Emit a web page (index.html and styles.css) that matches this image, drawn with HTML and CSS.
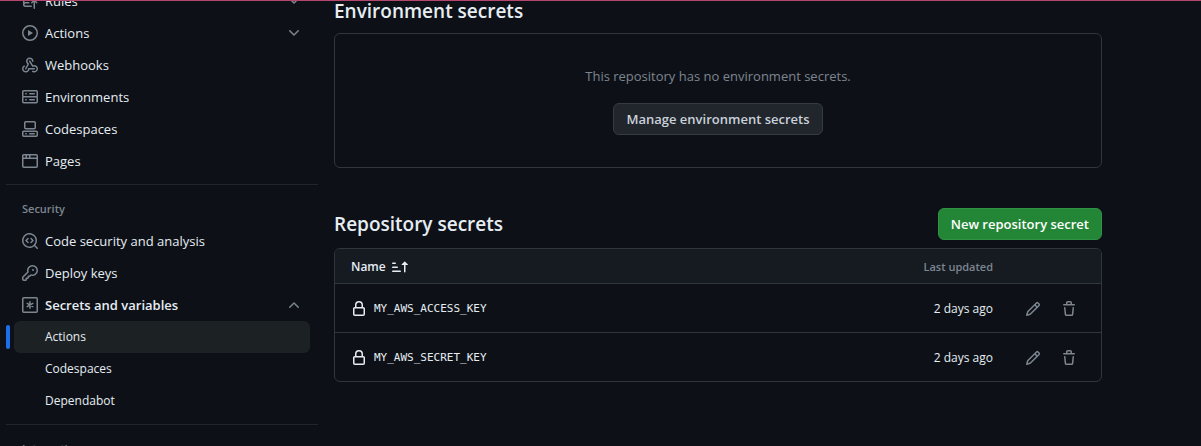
FILE: index.html
```html
<!DOCTYPE html>
<html lang="en">
<head>
<meta charset="utf-8">
<title>Actions secrets</title>
<link rel="stylesheet" href="styles.css">
</head>
<body>
<svg class="sprite" aria-hidden="true">
  <symbol id="i-push" viewBox="0 0 16 16"><path d="M1 2.5A2.5 2.5 0 0 1 3.5 0h8.75a.75.75 0 0 1 .75.75v3.5a.75.75 0 0 1-1.5 0V1.5h-8a1 1 0 0 0-1 1v6.708A2.493 2.493 0 0 1 3.5 9h3.25a.75.75 0 0 1 0 1.5H3.5a1 1 0 0 0 0 2h5.75a.75.75 0 0 1 0 1.5H3.5A2.5 2.5 0 0 1 1 11.5Zm13.23 7.79-1.225-1.224v6.184a.75.75 0 0 1-1.5 0V9.066L10.28 10.29a.75.75 0 0 1-1.06-1.061l2.505-2.504a.75.75 0 0 1 1.06 0L15.29 9.23a.751.751 0 0 1-1.06 1.06Z"/></symbol>
  <symbol id="i-play" viewBox="0 0 16 16"><path d="M8 0a8 8 0 1 1 0 16A8 8 0 0 1 8 0ZM1.5 8a6.5 6.5 0 1 0 13 0 6.5 6.5 0 0 0-13 0Zm4.879-2.773 4.264 2.559a.25.25 0 0 1 0 .428l-4.264 2.559A.25.25 0 0 1 6 10.559V5.442a.25.25 0 0 1 .379-.215Z"/></symbol>
  <symbol id="i-webhook" viewBox="0 0 16 16"><path d="M5.5 4.25a2.25 2.25 0 0 1 4.5 0 .75.75 0 0 0 1.5 0 3.75 3.75 0 1 0-6.14 2.889l-2.272 4.258a.75.75 0 0 0 1.324.706L7 7.25a.75.75 0 0 0-.309-1.015A2.25 2.25 0 0 1 5.5 4.25Z"/><path d="M7.364 3.607a.75.75 0 0 1 1.03.257l2.608 4.349a3.75 3.75 0 1 1-.628 6.785.75.75 0 0 1 .752-1.299 2.25 2.25 0 1 0-.033-3.88.75.75 0 0 1-1.03-.256L7.107 4.636a.75.75 0 0 1 .257-1.03Z"/><path d="M2.9 8.776A.75.75 0 0 1 2.625 9.8 2.25 2.25 0 1 0 6 11.75a.75.75 0 0 1 .75-.751h5.5a.75.75 0 0 1 0 1.5H7.425a3.751 3.751 0 1 1-5.55-3.998.75.75 0 0 1 1.024.274Z"/></symbol>
  <symbol id="i-server" viewBox="0 0 16 16"><path d="M1.75 1h12.5c.966 0 1.75.784 1.75 1.75v4c0 .372-.116.717-.314 1 .198.283.314.628.314 1v4a1.75 1.75 0 0 1-1.75 1.75H1.75A1.75 1.75 0 0 1 0 12.75v-4c0-.358.109-.707.314-1a1.739 1.739 0 0 1-.314-1v-4C0 1.784.784 1 1.75 1ZM1.5 2.75v4c0 .138.112.25.25.25h12.5a.25.25 0 0 0 .25-.25v-4a.25.25 0 0 0-.25-.25H1.75a.25.25 0 0 0-.25.25Zm.25 5.75a.25.25 0 0 0-.25.25v4c0 .138.112.25.25.25h12.5a.25.25 0 0 0 .25-.25v-4a.25.25 0 0 0-.25-.25ZM7 4.75A.75.75 0 0 1 7.75 4h4.5a.75.75 0 0 1 0 1.5h-4.5A.75.75 0 0 1 7 4.75ZM7.75 10h4.5a.75.75 0 0 1 0 1.5h-4.5a.75.75 0 0 1 0-1.5ZM3 4.75A.75.75 0 0 1 3.75 4h.5a.75.75 0 0 1 0 1.5h-.5A.75.75 0 0 1 3 4.75ZM3.75 10h.5a.75.75 0 0 1 0 1.5h-.5a.75.75 0 0 1 0-1.5Z"/></symbol>
  <symbol id="i-codespaces" viewBox="0 0 16 16"><path d="M0 11.25c0-.966.784-1.75 1.75-1.75h12.5c.966 0 1.75.784 1.75 1.75v3A1.75 1.75 0 0 1 14.25 16H1.75A1.75 1.75 0 0 1 0 14.25Zm2-9.5C2 .784 2.784 0 3.75 0h8.5C13.216 0 14 .784 14 1.75v5a1.75 1.75 0 0 1-1.75 1.75h-8.5A1.75 1.75 0 0 1 2 6.75Zm1.75-.25a.25.25 0 0 0-.25.25v5c0 .138.112.25.25.25h8.5a.25.25 0 0 0 .25-.25v-5a.25.25 0 0 0-.25-.25Zm-2 9.5a.25.25 0 0 0-.25.25v3c0 .138.112.25.25.25h12.5a.25.25 0 0 0 .25-.25v-3a.25.25 0 0 0-.25-.25Z"/><path d="M7 12.75a.75.75 0 0 1 .75-.75h4.5a.75.75 0 0 1 0 1.5h-4.5a.75.75 0 0 1-.75-.75Zm-4 0a.75.75 0 0 1 .75-.75h.5a.75.75 0 0 1 0 1.5h-.5a.75.75 0 0 1-.75-.75Z"/></symbol>
  <symbol id="i-browser" viewBox="0 0 16 16"><path d="M0 2.75C0 1.784.784 1 1.75 1h12.5c.966 0 1.75.784 1.75 1.75v10.5A1.75 1.75 0 0 1 14.25 15H1.75A1.75 1.75 0 0 1 0 13.25ZM14.5 6h-13v7.25c0 .138.112.25.25.25h12.5a.25.25 0 0 0 .25-.25Zm-6-3.5v2h6V2.75a.25.25 0 0 0-.25-.25ZM5 2.5v2h2v-2Zm-3.25 0a.25.25 0 0 0-.25.25V4.5h2v-2Z"/></symbol>
  <symbol id="i-codescan" viewBox="0 0 16 16"><path d="M8.47 4.97a.75.75 0 0 0 0 1.06L9.94 7.5 8.47 8.97a.75.75 0 1 0 1.06 1.06l2-2a.75.75 0 0 0 0-1.06l-2-2a.75.75 0 0 0-1.06 0ZM6.53 6.03a.75.75 0 0 0-1.06-1.06l-2 2a.75.75 0 0 0 0 1.06l2 2a.75.75 0 1 0 1.06-1.06L5.06 7.5l1.47-1.47Z"/><path d="M12.246 13.307a7.501 7.501 0 1 1 1.06-1.06l2.474 2.473a.749.749 0 1 1-1.06 1.06l-2.474-2.473ZM1.5 7.5a6.002 6.002 0 0 0 3.608 5.504 6.002 6.002 0 0 0 6.486-1.117.748.748 0 0 1 .292-.293A6 6 0 1 0 1.5 7.5Z"/></symbol>
  <symbol id="i-key" viewBox="0 0 16 16"><path d="M10.5 0a5.499 5.499 0 1 1-1.288 10.848l-.932.932a.749.749 0 0 1-.53.22H7v.75a.749.749 0 0 1-.22.53l-.5.5a.749.749 0 0 1-.53.22H5v.75a.749.749 0 0 1-.22.53l-.5.5a.749.749 0 0 1-.53.22h-2A1.75 1.75 0 0 1 0 14.25v-2c0-.199.079-.389.22-.53l4.932-4.932A5.5 5.5 0 0 1 10.5 0Zm-4 5.5c-.001.431.069.86.205 1.269a.75.75 0 0 1-.181.768L1.5 12.56v1.69c0 .138.112.25.25.25h1.69l.06-.06v-1.19a.75.75 0 0 1 .75-.75h1.19l.06-.06v-1.19a.75.75 0 0 1 .75-.75h1.19l1.023-1.025a.75.75 0 0 1 .768-.18A4 4 0 1 0 6.5 5.5ZM11 6a1 1 0 1 1 0-2 1 1 0 0 1 0 2Z"/></symbol>
  <symbol id="i-asterisk" viewBox="0 0 16 16"><g fill="none" stroke="currentColor" stroke-width="1.5" stroke-linecap="round"><rect x=".75" y=".75" width="14.5" height="14.5" rx="1"/><path d="M8 4.75v6.5M5.2 6.4l5.6 3.2M10.8 6.4 5.2 9.6"/></g></symbol>
  <symbol id="i-chevron" viewBox="0 0 16 16"><path d="M12.78 5.22a.749.749 0 0 1 0 1.06l-4.25 4.25a.749.749 0 0 1-1.06 0L3.22 6.28a.749.749 0 1 1 1.06-1.06L8 8.939l3.72-3.719a.749.749 0 0 1 1.06 0Z"/></symbol>
  <symbol id="i-sort" viewBox="0 0 16 16"><path d="m12.927 2.573 3 3A.25.25 0 0 1 15.75 6H13.5v6.75a.75.75 0 0 1-1.5 0V6H9.75a.25.25 0 0 1-.177-.427l3-3a.25.25 0 0 1 .354 0ZM0 12.25a.75.75 0 0 1 .75-.75h7.5a.75.75 0 0 1 0 1.5H.75a.75.75 0 0 1-.75-.75Zm0-4a.75.75 0 0 1 .75-.75h4.5a.75.75 0 0 1 0 1.5H.75A.75.75 0 0 1 0 8.25Zm0-4a.75.75 0 0 1 .75-.75h2.5a.75.75 0 0 1 0 1.5H.75A.75.75 0 0 1 0 4.25Z"/></symbol>
  <symbol id="i-lock" viewBox="0 0 16 16"><path d="M4 4a4 4 0 0 1 8 0v2h.25c.966 0 1.75.784 1.75 1.75v5.5A1.75 1.75 0 0 1 12.25 15h-8.5A1.75 1.75 0 0 1 2 13.25v-5.5C2 6.784 2.784 6 3.75 6H4Zm8.25 3.5h-8.5a.25.25 0 0 0-.25.25v5.5c0 .138.112.25.25.25h8.5a.25.25 0 0 0 .25-.25v-5.5a.25.25 0 0 0-.25-.25ZM10.5 6V4a2.5 2.5 0 1 0-5 0v2Z"/></symbol>
  <symbol id="i-pencil" viewBox="0 0 16 16"><path d="M11.013 1.427a1.75 1.75 0 0 1 2.474 0l1.086 1.086a1.75 1.75 0 0 1 0 2.474l-8.61 8.61c-.21.21-.47.364-.756.445l-3.251.93a.75.75 0 0 1-.927-.928l.929-3.25c.081-.286.235-.547.445-.758l8.61-8.61Zm.176 4.823L9.75 4.81l-6.286 6.287a.253.253 0 0 0-.064.108l-.558 1.953 1.953-.558a.253.253 0 0 0 .108-.064Zm1.238-3.763a.25.25 0 0 0-.354 0L10.811 3.75l1.439 1.44 1.263-1.263a.25.25 0 0 0 0-.354Z"/></symbol>
  <symbol id="i-trash" viewBox="0 0 16 16"><path d="M11 1.75V3h2.25a.75.75 0 0 1 0 1.5H2.75a.75.75 0 0 1 0-1.5H5V1.75C5 .784 5.784 0 6.75 0h2.5C10.216 0 11 .784 11 1.75ZM4.496 6.675l.66 6.6a.25.25 0 0 0 .249.225h5.19a.25.25 0 0 0 .249-.225l.66-6.6a.75.75 0 0 1 1.492.149l-.66 6.6A1.748 1.748 0 0 1 10.595 15h-5.19a1.75 1.75 0 0 1-1.741-1.575l-.66-6.6a.75.75 0 1 1 1.492-.15ZM6.5 1.75V3h3V1.75a.25.25 0 0 0-.25-.25h-2.5a.25.25 0 0 0-.25.25Z"/></symbol>
</svg>

<div class="top-line"></div>
<div class="page">
  <nav class="sidebar" aria-label="Repository settings">
    <ul class="nav-list">
      <li><button class="nav-item" type="button"><svg class="icon"><use href="#i-push"/></svg><span class="nav-label">Rules</span><svg class="icon"><use href="#i-chevron"/></svg></button></li>
      <li><button class="nav-item" type="button"><svg class="icon"><use href="#i-play"/></svg><span class="nav-label">Actions</span><svg class="icon"><use href="#i-chevron"/></svg></button></li>
      <li><a class="nav-item" href="#"><svg class="icon"><use href="#i-webhook"/></svg><span class="nav-label">Webhooks</span></a></li>
      <li><a class="nav-item" href="#"><svg class="icon"><use href="#i-server"/></svg><span class="nav-label">Environments</span></a></li>
      <li><a class="nav-item" href="#"><svg class="icon"><use href="#i-codespaces"/></svg><span class="nav-label">Codespaces</span></a></li>
      <li><a class="nav-item" href="#"><svg class="icon"><use href="#i-browser"/></svg><span class="nav-label">Pages</span></a></li>
    </ul>
    <h3 class="nav-heading">Security</h3>
    <ul class="nav-list">
      <li><a class="nav-item" href="#"><svg class="icon"><use href="#i-codescan"/></svg><span class="nav-label">Code security and analysis</span></a></li>
      <li><a class="nav-item" href="#"><svg class="icon"><use href="#i-key"/></svg><span class="nav-label">Deploy keys</span></a></li>
      <li>
        <button class="nav-item nav-item-open" type="button" aria-expanded="true"><svg class="icon"><use href="#i-asterisk"/></svg><span class="nav-label">Secrets and variables</span><svg class="icon icon-up"><use href="#i-chevron"/></svg></button>
        <ul class="sub-list">
          <li class="sub-current"><a class="sub-item" href="#" aria-current="page">Actions</a></li>
          <li><a class="sub-item" href="#">Codespaces</a></li>
          <li><a class="sub-item" href="#">Dependabot</a></li>
        </ul>
      </li>
    </ul>
    <h3 class="nav-heading">Integrations</h3>
  </nav>

  <main class="content">
    <section class="section">
      <h2 class="title">Environment secrets</h2>
      <div class="blank">
        <p class="blank-text">This repository has no environment secrets.</p>
        <button class="btn" type="button">Manage environment secrets</button>
      </div>
    </section>
    <section class="section">
      <div class="section-head">
        <h2 class="title">Repository secrets</h2>
        <button class="btn btn-primary" type="button">New repository secret</button>
      </div>
      <div class="table-box">
        <table class="secrets">
          <thead>
            <tr>
              <th class="col-name" scope="col"><button class="sort" type="button">Name <svg class="icon"><use href="#i-sort"/></svg></button></th>
              <th class="col-date" scope="col">Last updated</th>
              <th class="col-actions" scope="col" aria-label="Actions"></th>
            </tr>
          </thead>
          <tbody>
            <tr>
              <td class="col-name"><div class="secret"><svg class="icon"><use href="#i-lock"/></svg><code class="key">MY_AWS_ACCESS_KEY</code></div></td>
              <td class="col-date">2 days ago</td>
              <td class="col-actions"><div class="row-actions"><button class="icon-btn" type="button" aria-label="Edit"><svg class="icon"><use href="#i-pencil"/></svg></button><button class="icon-btn" type="button" aria-label="Delete"><svg class="icon"><use href="#i-trash"/></svg></button></div></td>
            </tr>
            <tr>
              <td class="col-name"><div class="secret"><svg class="icon"><use href="#i-lock"/></svg><code class="key">MY_AWS_SECRET_KEY</code></div></td>
              <td class="col-date">2 days ago</td>
              <td class="col-actions"><div class="row-actions"><button class="icon-btn" type="button" aria-label="Edit"><svg class="icon"><use href="#i-pencil"/></svg></button><button class="icon-btn" type="button" aria-label="Delete"><svg class="icon"><use href="#i-trash"/></svg></button></div></td>
            </tr>
          </tbody>
        </table>
      </div>
    </section>
  </main>
</div>
</body>
</html>
```

FILE: styles.css
```css
* {
  box-sizing: border-box;
}

body {
  height: 100vh;
  margin: 0;
  overflow: hidden;
  background: #0d1117;
  color: #e6edf3;
  font-family: "Open Sans", "Noto Sans", sans-serif;
  font-size: 13px;
  line-height: 20px;
}

h2, h3, p, ul {
  margin: 0;
  padding: 0;
}

ul {
  list-style: none;
}

button {
  font: inherit;
  color: inherit;
  cursor: pointer;
}

a {
  color: inherit;
  text-decoration: none;
}

.sprite {
  display: none;
}

.icon {
  display: block;
  flex: none;
  width: 16px;
  height: 16px;
  fill: currentColor;
}

.icon-up {
  transform: rotate(180deg);
}

.top-line {
  position: fixed;
  inset: 0 0 auto;
  height: 1px;
  background: #b5476f;
}

/* The page sits scrolled under the top line */
.page {
  display: flex;
  gap: 16px;
  margin-top: -15px;
  padding: 0 99px 0 6px;
}

.sidebar {
  flex: none;
  width: 312px;
}

.nav-item {
  display: flex;
  align-items: center;
  gap: 7px;
  width: 296px;
  height: 32px;
  margin: 0 8px;
  padding: 0 8px;
  border: 0;
  background: none;
  text-align: left;
}

.nav-item .icon {
  color: #7d8590;
}

.nav-label {
  flex: 1;
}

.nav-item-open {
  font-weight: 600;
}

.nav-heading {
  margin-top: 7px;
  padding: 14px 16px;
  border-top: 1px solid #21262d;
  color: #7d8590;
  font-size: 11px;
  font-weight: 600;
  line-height: 20px;
}

.nav-heading + .nav-list {
  margin-top: -8px;
}

.sub-list {
  font-size: 12px;
}

.sub-item {
  display: block;
  height: 32px;
  margin: 0 8px;
  padding: 6px 8px 6px 31px;
  border-radius: 6px;
}

.sub-current {
  position: relative;
}

.sub-current .sub-item {
  background: #1c2123;
}

.sub-current::before {
  content: "";
  position: absolute;
  top: 4px;
  left: 0;
  width: 4px;
  height: 24px;
  border-radius: 6px;
  background: #1f6feb;
}

.content {
  flex: 1;
  min-width: 0;
  padding-top: 11px;
}

.section + .section {
  margin-top: 40px;
}

.title {
  font-size: 19px;
  font-weight: 600;
  line-height: 30px;
}

.blank {
  display: flex;
  flex-direction: column;
  align-items: center;
  gap: 16px;
  margin-top: 7px;
  padding: 32px;
  border: 1px solid #30363d;
  border-radius: 6px;
}

.blank-text {
  color: #7d8590;
  line-height: 21px;
}

.btn {
  height: 32px;
  padding: 0 12px;
  border: 1px solid #363b42;
  border-radius: 6px;
  background: #21262d;
  color: #c9d1d9;
  font-weight: 600;
}

.btn-primary {
  border-color: #2f9143;
  background: #238636;
  color: #ffffff;
}

.section-head {
  display: flex;
  align-items: center;
  justify-content: space-between;
  margin-bottom: 8px;
}

.section-head .title {
  line-height: 32px;
}

.table-box {
  border: 1px solid #30363d;
  border-radius: 6px;
  overflow: hidden;
}

.secrets {
  width: 100%;
  border-collapse: collapse;
  font-size: 12px;
}

.secrets th {
  height: 34px;
  padding: 2px 0 0;
  background: #161b22;
  font-weight: 600;
  text-align: left;
}

.secrets td {
  height: 49px;
  padding: 2px 0 0;
  border-top: 1px solid #30363d;
}

.secrets .col-name {
  padding-left: 16px;
}

.secrets .col-date {
  width: 120px;
  text-align: right;
}

.secrets th.col-date {
  color: #7d8590;
  font-size: 11px;
}

.secrets .col-actions {
  width: 108px;
}

.sort {
  display: flex;
  align-items: center;
  gap: 6px;
  padding: 0;
  border: 0;
  background: none;
}

.secret {
  display: flex;
  align-items: center;
  gap: 7px;
}

.key {
  font-family: "DejaVu Sans Mono", monospace;
  font-size: 11px;
}

.row-actions {
  display: flex;
  gap: 4px;
  padding-left: 24px;
}

.icon-btn {
  width: 32px;
  padding: 8px;
  border: 0;
  background: none;
  color: #7d8590;
}
```
